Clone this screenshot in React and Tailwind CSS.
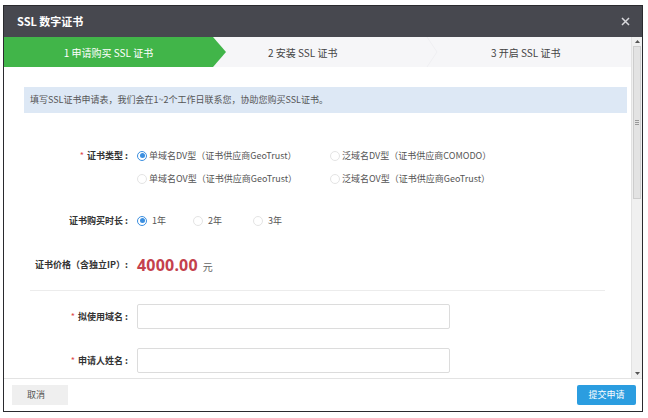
import React from "react";

const F = "font-['Noto_Sans_CJK_SC','Noto_Sans',sans-serif]";

function Radio({ checked }) {
  return checked ? (
    <span className="w-[10px] h-[10px] rounded-full border border-[#3b8fe0] flex items-center justify-center bg-white shrink-0">
      <span className="w-[5px] h-[5px] rounded-full bg-[#3b8fe0]" />
    </span>
  ) : (
    <span className="w-[10px] h-[10px] rounded-full border border-[#e4e4e4] bg-white shrink-0" />
  );
}

function RadioItem({ checked, label, gap = "gap-[2px]", w }) {
  return (
    <div className={`flex items-center h-[23px] ${gap} ${w || ""}`}>
      <Radio checked={checked} />
      <span className="text-[9px] text-[#555] whitespace-nowrap">{label}</span>
    </div>
  );
}

export default function App() {
  return (
    <div className={`w-[648px] h-[418px] bg-white overflow-hidden ${F}`}>
      <div className="ml-[3px] mt-[5px] w-[640px] h-[407px] border border-[#2a2a2e] flex flex-col bg-white">
        {/* header */}
        <div className="h-[31px] bg-[#47484f] flex items-center justify-between pl-[13px] pr-[12px] shrink-0">
          <span className="text-white text-[11px] font-bold">SSL 数字证书</span>
          <svg width="9" height="9" viewBox="0 0 9 9">
            <path d="M1 1L8 8M8 1L1 8" stroke="#d8d8dc" strokeWidth="1.5" />
          </svg>
        </div>

        {/* body */}
        <div className="h-[341px] flex shrink-0 overflow-hidden">
          <div className="flex-1 flex flex-col">
            {/* steps */}
            <div className="h-[30px] bg-[#f6f6f8] flex items-center shrink-0">
              <div className="w-[222px] h-[30px] bg-[#41b549] [clip-path:polygon(0_0,209px_0,100%_50%,209px_100%,0_100%)] flex items-center justify-center pr-[13px]">
                <span className="text-white text-[10px]">1 申请购买 SSL 证书</span>
              </div>
              <div className="w-[200px] pl-[42px] text-[10px] text-[#444]">2 安装 SSL 证书</div>
              <svg width="12" height="30" viewBox="0 0 12 30">
                <path d="M1 0L11 15L1 30" stroke="#efeff2" strokeWidth="1" fill="none" />
              </svg>
              <div className="pl-[53px] text-[10px] text-[#444]">3 开启 SSL 证书</div>
            </div>

            {/* info */}
            <div className="mt-[20px] ml-[20px] mr-[4px] h-[26px] bg-[#dde8f5] flex items-center pl-[6px] shrink-0">
              <span className="text-[9px] text-[#555]">填写SSL证书申请表，我们会在1~2个工作日联系您，协助您购买SSL证书。</span>
            </div>

            {/* row: 证书类型 */}
            <div className="mt-[31px] flex shrink-0">
              <div className="w-[124px] h-[23px] flex items-center justify-end text-[9px] font-bold text-[#333]">
                <span className="text-[#e04b4b] font-normal mr-[3px]">*</span>证书类型 :
              </div>
              <div className="ml-[9px] grid grid-cols-[193px_auto]">
                <RadioItem checked label="单域名DV型（证书供应商GeoTrust）" />
                <RadioItem label="泛域名DV型（证书供应商COMODO）" />
                <RadioItem label="单域名OV型（证书供应商GeoTrust）" />
                <RadioItem label="泛域名OV型（证书供应商GeoTrust）" />
              </div>
            </div>

            {/* row: 购买时长 */}
            <div className="mt-[19px] flex shrink-0">
              <div className="w-[124px] h-[23px] flex items-center justify-end text-[9px] font-bold text-[#333]">
                证书购买时长 :
              </div>
              <div className="ml-[9px] flex">
                <RadioItem checked label="1年" gap="gap-[5px]" w="w-[56px]" />
                <RadioItem label="2年" gap="gap-[5px]" w="w-[60px]" />
                <RadioItem label="3年" gap="gap-[5px]" />
              </div>
            </div>

            {/* row: price */}
            <div className="mt-[21px] flex items-center h-[23px] shrink-0">
              <div className="w-[124px] flex items-center justify-end text-[9px] font-bold text-[#333] whitespace-nowrap">
                证书价格（含独立IP）:
              </div>
              <div className="ml-[9px] flex items-baseline gap-[5px]">
                <span className="text-[16px] font-bold text-[#c4414c] font-['Noto_Sans','Noto_Sans_CJK_SC',sans-serif] tracking-[0.2px]">4000.00</span>
                <span className="text-[10px] text-[#666]">元</span>
              </div>
            </div>

            <div className="mt-[14px] ml-[26px] w-[575px] h-px bg-[#ececec] shrink-0" />

            {/* domain */}
            <div className="mt-[13px] flex items-center shrink-0">
              <div className="w-[124px] flex items-center justify-end text-[9px] font-bold text-[#333]">
                <span className="text-[#e04b4b] font-normal mr-[3px]">*</span>拟使用域名 :
              </div>
              <div className="ml-[9px] w-[313px] h-[25px] border border-[#dcdcdc] rounded-[2px] bg-white" />
            </div>

            {/* name */}
            <div className="mt-[19px] flex items-center shrink-0">
              <div className="w-[124px] flex items-center justify-end text-[9px] font-bold text-[#333]">
                <span className="text-[#e04b4b] font-normal mr-[3px]">*</span>申请人姓名 :
              </div>
              <div className="ml-[9px] w-[313px] h-[25px] border border-[#dcdcdc] rounded-[2px] bg-white" />
            </div>
          </div>

          {/* scrollbar */}
          <div className="w-[11px] bg-[#f0f0f0] border-l border-[#e2e2e2] flex flex-col shrink-0">
            <div className="h-[9px] flex items-center justify-center">
              <svg width="5" height="3" viewBox="0 0 5 3"><path d="M0 3L2.5 0L5 3Z" fill="#555" /></svg>
            </div>
            <div className="h-[153px] mx-[1px] bg-[#e3e3e3] border border-[#cdcdcd] flex items-center justify-center">
              <div className="flex flex-col gap-[1px]">
                <div className="w-[4px] h-px bg-[#999]" />
                <div className="w-[4px] h-px bg-[#999]" />
                <div className="w-[4px] h-px bg-[#999]" />
              </div>
            </div>
            <div className="flex-1" />
            <div className="h-[9px] flex items-center justify-center">
              <svg width="5" height="3" viewBox="0 0 5 3"><path d="M0 0L2.5 3L5 0Z" fill="#555" /></svg>
            </div>
          </div>
        </div>

        {/* footer */}
        <div className="flex-1 border-t border-[#e3e3e3] flex items-center justify-between pl-[8px] pr-[6px]">
          <div className="w-[56px] h-[20px] bg-[#efefef] flex items-center pl-[15px] text-[9px] text-[#555]">取消</div>
          <div className="w-[59px] h-[20px] bg-[#2b9de0] rounded-[2px] flex items-center justify-center text-[9px] text-white">提交申请</div>
        </div>
      </div>
    </div>
  );
}
